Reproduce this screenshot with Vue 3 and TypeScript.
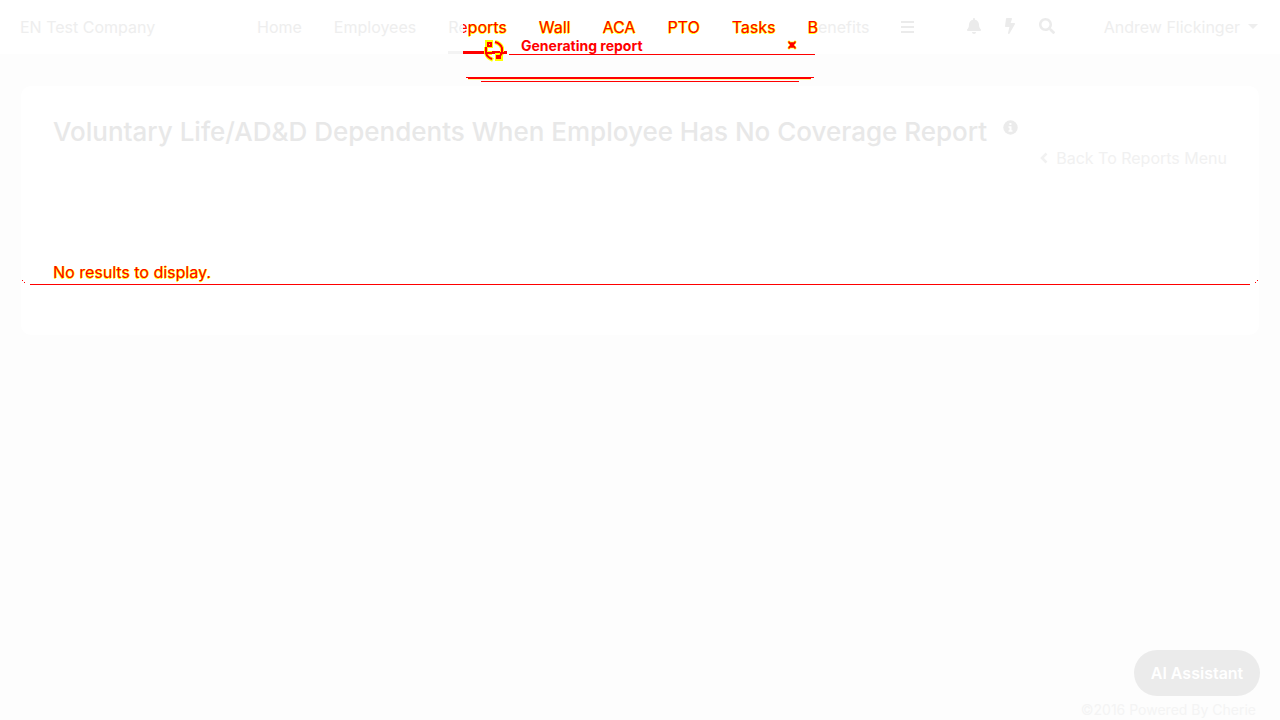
<script setup lang="ts">
const before: string[] = ['Home', 'Employees']
const marked: string[] = ['Wall', 'ACA', 'PTO', 'Tasks']
</script>

<template>
  <div class="page">
    <header class="topbar">
      <a class="brand" href="#">EN Test Company</a>
      <nav class="nav">
        <a v-for="item in before" :key="item" href="#">{{ item }}</a>
        <a class="active" href="#" aria-current="page">R<span class="half">e</span><span class="changed">ports</span></a>
        <a v-for="item in marked" :key="item" class="changed" href="#">{{ item }}</a>
        <a href="#"><span class="changed">B</span>enefits</a>
        <button class="icon more" type="button" aria-label="More">
          <svg width="13" height="12" viewBox="0 0 13 12"><path d="M0 1h13M0 6h13M0 11h13" stroke="currentColor" stroke-width="2" /></svg>
        </button>
      </nav>
      <div class="tools">
        <button class="icon" type="button" aria-label="Notifications">
          <svg width="14" height="16" viewBox="0 0 448 512"><path fill="currentColor" d="M224 512c35.300 0 63.900-28.700 63.900-64H160.100c0 35.300 28.600 64 63.900 64zm215.400-149.700c-19.300-20.800-55.500-52-55.500-154.300 0-77.700-54.500-139.900-127.900-155.200V32c0-17.700-14.300-32-32-32s-32 14.300-32 32v20.800C118.600 68.100 64.100 130.300 64.100 208c0 102.300-36.200 133.500-55.500 154.300C2.600 368.700 0 376.400 0 384c.1 16.400 13 32 32.100 32h383.800c19.100 0 32-15.600 32.100-32 0-7.600-2.600-15.300-8.600-21.700z" /></svg>
        </button>
        <button class="icon" type="button" aria-label="Quick actions">
          <svg width="10" height="16" viewBox="0 0 320 512"><path fill="currentColor" d="M296 160H180.600l42.600-129.800C227.200 15 215.700 0 200 0H56C44 0 33.800 8.900 32.200 20.800l-32 240C-1.700 275.200 9.500 288 24 288h118.700L96.600 482.500c-3.600 15.200 8 29.500 23.300 29.500 8.400 0 16.400-4.400 20.800-12l176-304c9.300-15.900-2.200-36-20.700-36z" /></svg>
        </button>
        <button class="icon" type="button" aria-label="Search">
          <svg width="16" height="16" viewBox="0 0 512 512"><path fill="currentColor" d="M505 442.700L405.300 343c-4.500-4.500-10.600-7-17-7H372c27.600-35.300 44-79.700 44-128C416 93.100 322.900 0 208 0S0 93.100 0 208s93.100 208 208 208c48.300 0 92.700-16.400 128-44v16.300c0 6.400 2.500 12.500 7 17l99.700 99.700c9.400 9.400 24.600 9.400 33.900 0l28.300-28.300c9.400-9.400 9.400-24.600.1-34zM208 336c-70.700 0-128-57.200-128-128 0-70.700 57.200-128 128-128 70.700 0 128 57.200 128 128 0 70.700-57.200 128-128 128z" /></svg>
        </button>
      </div>
      <button class="user" type="button">
        Andrew Flickinger
        <svg width="10" height="6" viewBox="0 0 10 6"><path fill="currentColor" d="M0 0h10L5 5z" /></svg>
      </button>
    </header>

    <section class="toast" role="status">
      <svg class="spinner" width="24" height="24" viewBox="0 0 24 24" fill="none">
        <g stroke="#ff0" stroke-width="4">
          <path d="M4 3h4v4H4zM12 3c4 1 6 3 7 6v5l-2 4M3 8v6c1 4 3 5 7 7M2 14h7M14 16h4v4h-4z" />
        </g>
        <g stroke="red" stroke-width="2">
          <path d="M5 4h3v3H5zM12 3c4 1 6 3 7 6v5l-2 3M3 8v6c1 4 3 5 6 6M2 14h7M14 17h3v2h-3zM17 14h7" />
        </g>
      </svg>
      <strong>Generating report</strong>
      <button class="close" type="button" aria-label="Close">
        <svg width="10" height="10" viewBox="0 0 10 10"><path d="M1 1h2v1h4V1h2v2L7 5l2 2v2H7V8H3v1H1V7l2-2-2-2z" fill="red" stroke="#ff0" stroke-width=".6" /></svg>
      </button>
      <i class="rule"></i>
      <i class="edge"></i>
      <i class="shade"></i>
    </section>

    <main class="card">
      <div class="heading">
        <h1>Voluntary Life/AD&amp;D Dependents When Employee Has No Coverage Report</h1>
        <button class="icon info" type="button" aria-label="Report information">
          <svg width="15" height="15" viewBox="0 0 15 15"><circle cx="7.500" cy="7.500" r="7.200" fill="currentColor" /><path d="M6.400 3h2v2h-2zM5.500 6.200h3v4h1v1.500h-4v-1.500h1V7.700h-1z" fill="#fff" /></svg>
        </button>
      </div>
      <a class="back" href="#">
        <svg width="8" height="12" viewBox="0 0 8 12"><path d="M6.500 1.500L2 6l4.500 4.500" fill="none" stroke="currentColor" stroke-width="2.600" /></svg>
        Back To Reports Menu
      </a>
      <p class="empty changed">No results to display.</p>
      <svg class="corner left" width="8" height="4" viewBox="0 0 8 4"><path fill="red" d="M0 0h1v1H0zM2 2h1v1H2z" /></svg>
      <svg class="corner right" width="8" height="4" viewBox="0 0 8 4"><path fill="red" d="M7 0h1v1H7zM5 2h1v1H5z" /></svg>
      <div class="divider"></div>
    </main>

    <footer>
      <button class="assistant" type="button">AI Assistant</button>
      <p>©2016 Powered By Cherie</p>
    </footer>
  </div>
</template>

<style>
body { margin: 0; background: #fdfdfd; }
</style>

<style scoped>
* { box-sizing: border-box; }
.page {
  position: relative;
  display: flex;
  flex-direction: column;
  min-height: 100vh;
  background: #fdfdfd;
  color: #eee;
  font: 16px/24px Inter, "Liberation Sans", sans-serif;
}
a { color: inherit; text-decoration: none; white-space: nowrap; }
button { padding: 0; border: 0; background: none; color: inherit; font: inherit; cursor: pointer; }
svg { display: block; }
.topbar { display: flex; align-items: center; height: 54px; padding: 0 22px 0 20px; background: #fff; }
.brand { width: 237px; }
.nav { display: flex; align-items: center; gap: 32px; height: 54px; }
.nav a { position: relative; line-height: 54px; }
.changed, .nav .changed { color: red; text-shadow: 1px 0 #ff0, 0 1px #ff0; }
.half {
  background: linear-gradient(90deg, #eee 50%, red 50%);
  background-clip: text;
  -webkit-background-clip: text;
  color: transparent;
}
.active::after {
  content: "";
  position: absolute;
  left: 0;
  right: 0;
  bottom: 0;
  height: 3px;
  background: linear-gradient(90deg, #f3f3f3 15px, red 15px);
}
.tools { display: flex; gap: 24px; align-items: center; margin-left: auto; padding-bottom: 2px; }
.icon { color: #ebebeb; }
.user { display: flex; align-items: center; gap: 8px; margin-left: 49px; white-space: nowrap; }
.toast {
  position: absolute;
  top: 38px;
  left: 50%;
  width: 352px;
  height: 44px;
  transform: translateX(-50%);
  color: red;
}
.toast strong { position: absolute; left: 57px; top: 0; font-size: 14px; line-height: 16px; font-weight: 700; }
.spinner { position: absolute; left: 19px; top: 1px; }
.close { position: absolute; right: 19px; top: 2px; }
.rule, .edge, .shade { position: absolute; height: 1px; background: red; }
.rule { left: 45px; right: 1px; top: 16px; }
.edge { left: 2px; right: 2px; top: 39px; }
.edge::before { content: ""; position: absolute; left: 2px; right: 3px; top: 1px; height: 1px; background: red; box-shadow: 0 1px #ff06; }
.shade { left: 17px; right: 17px; top: 43px; }
.card { position: relative; margin: 32px 21px 0; min-height: 249px; padding: 30px 32px 50px; background: #fff; border-radius: 10px; }
.heading { display: flex; gap: 16px; }
h1 { margin: 0; color: #e8e8e8; font-size: 26px; line-height: 32px; font-weight: 500; }
.info { align-self: flex-start; padding-top: 4px; }
.back { display: flex; align-items: center; gap: 8px; width: max-content; margin: -2px 0 0 auto; color: #f1f1f1; }
.empty { margin: 90px 0 0; }
.divider { height: 1px; margin: 0 -23px; background: red; }
.corner { position: absolute; top: 194px; }
.left { left: 1px; }
.right { right: 1px; }
footer { display: flex; flex-direction: column; align-items: flex-end; margin-top: auto; padding-right: 20px; }
.assistant { width: 126px; height: 46px; border-radius: 23px; background: #ebebeb; color: #fff; font-weight: 600; }
footer p { margin: 4px 4px 0 0; color: #f4f4f4; font-size: 14px; line-height: 20px; }
</style>
